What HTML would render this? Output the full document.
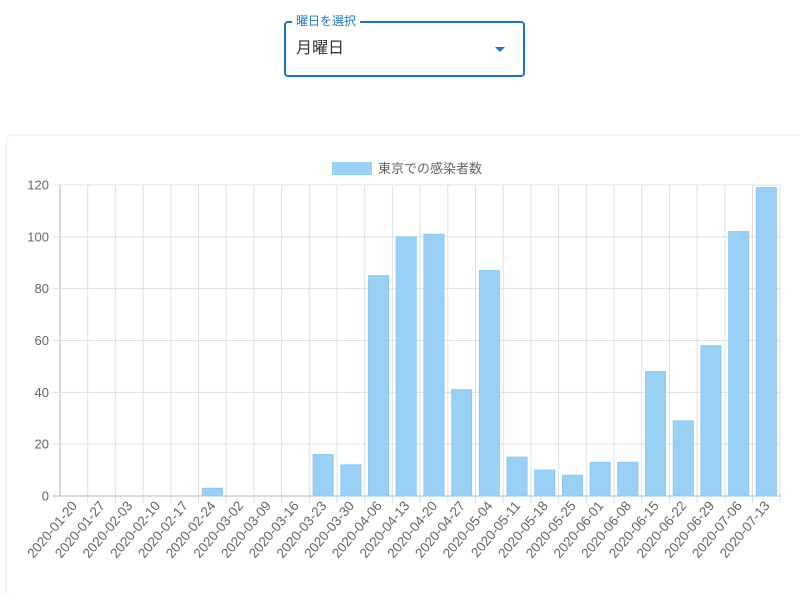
<!DOCTYPE html>
<html><head><meta charset="utf-8"><style>
body{margin:0;width:800px;height:560px;background:#fff;overflow:hidden;font-family:"Liberation Sans","Noto Sans CJK JP",sans-serif;position:relative}
.sel{position:absolute;left:284px;top:21px;width:241px;height:56px;border:2px solid #1976d2;border-radius:4px;box-sizing:border-box}
.lab{position:absolute;left:292px;top:13px;background:#fff;padding:0 4px;font-size:12px;color:#1976d2;line-height:16px}
.val{position:absolute;left:296px;top:38px;font-size:16px;color:#333;line-height:22px}
.arr{position:absolute;left:495px;top:47px;width:0;height:0;border-left:5px solid transparent;border-right:5px solid transparent;border-top:5px solid #1976d2}
.card{position:absolute;left:7px;top:136px;width:800px;height:460px;background:#fff;border-radius:4px;box-shadow:0 0 3px rgba(0,0,0,.15)}
svg{position:absolute;left:0;top:0}
</style></head><body>
<div class="sel"></div><div class="lab">曜日を選択</div><div class="val">月曜日</div><div class="arr"></div>
<div class="card"></div>
<svg width="800" height="560" id="s" font-family="Liberation Sans, Noto Sans CJK JP, sans-serif"></svg>
<script>
var s=document.getElementById('s'),h='';
var d=['01-20','01-27','02-03','02-10','02-17','02-24','03-02','03-09','03-16','03-23','03-30','04-06','04-13','04-20','04-27','05-04','05-11','05-18','05-25','06-01','06-08','06-15','06-22','06-29','07-06','07-13'];
var v=[0,0,0,0,0,3,0,0,0,16,12,85,100,101,41,87,15,10,8,13,13,48,29,58,102,119];
var x0=60,st=27.7,y0=496,k=311/120;
for(var i=0;i<=26;i++){var x=x0+i*st;h+='<line x1="'+x+'" y1="185" x2="'+x+'" y2="'+(i==0?496:503)+'" stroke="'+(i==0?'#b5b5b5':'#e0e0e0')+'"/>';}
for(var j=0;j<=6;j++){var y=y0-j*20*k;h+='<line x1="53" y1="'+y+'" x2="781" y2="'+y+'" stroke="'+(j==0?'#b5b5b5':'#e0e0e0')+'"/><text x="49" y="'+(y+4.5)+'" font-size="13" fill="#666" text-anchor="end">'+(j*20)+'</text>';}
for(var i=0;i<26;i++){var c=x0+st*(i+.5);if(v[i])h+='<rect x="'+(c-10)+'" y="'+(y0-v[i]*k)+'" width="20" height="'+(v[i]*k)+'" fill="#9ad0f5" stroke="#8cc8f2"/>';
h+='<text transform="translate('+(c+4)+',506) rotate(-50)" font-size="13.5" fill="#666" text-anchor="end">2020-'+d[i]+'</text>';}
h+='<rect x="332" y="162" width="40" height="13" fill="#9ad0f5"/><text x="378" y="173" font-size="13" fill="#666">東京での感染者数</text>';
s.innerHTML=h;
</script>
</body></html>
